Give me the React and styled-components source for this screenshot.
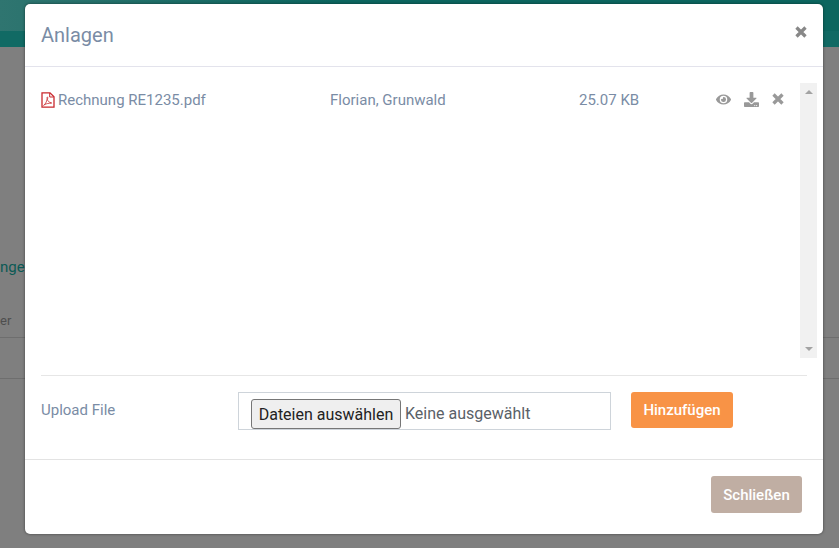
import styled, { createGlobalStyle } from "styled-components";
import { FaEye, FaDownload } from "react-icons/fa";

const GlobalStyle = createGlobalStyle`
  html, body {
    margin: 0;
    padding: 0;
    height: 100%;
    overflow: hidden;
    font-family: Roboto, "Liberation Sans", sans-serif;
  }
`;

const Page = styled.div`
  width: 839px;
  height: 548px;
  position: relative;
  overflow: hidden;
  background: #7f7f7f;
`;
const TopBar = styled.div`
  height: 31px;
  background: linear-gradient(to right, #2f7570, #0c665f 40%);
`;
const SubBar = styled.div`
  height: 16px;
  background: #116a64;
`;
const BehindLink = styled.div`
  margin-top: 210px;
  height: 20px;
  font-size: 15px;
  line-height: 20px;
  color: #0b5a55;
`;
const BehindHead = styled.div`
  margin-top: 33px;
  height: 26px;
  border-bottom: 1px solid #6e6e6e;
  padding-top: 1px;
  box-sizing: content-box;
  font-size: 13px;
  line-height: 20px;
  color: #4e4e4e;
`;
const BehindRow = styled.div`
  height: 40px;
  border-bottom: 1px solid #6e6e6e;
`;
const Backdrop = styled.div`
  position: absolute;
  inset: 0;
  padding: 4px 16px 14px 25px;
`;
const Modal = styled.div`
  width: 798px;
  height: 530px;
  box-sizing: border-box;
  background: #fff;
  border-radius: 5px;
  box-shadow: 0 0 3px rgba(0, 0, 0, 0.5);
  display: flex;
  flex-direction: column;
`;
const Header = styled.div`
  height: 62px;
  box-sizing: content-box;
  border-bottom: 1px solid #e3e3ec;
  padding: 0 16px;
  display: flex;
  align-items: center;
  justify-content: space-between;
`;
const Title = styled.h4`
  margin: 0;
  font-size: 20px;
  font-weight: 400;
  color: #7a8ca5;
`;
const CloseWrap = styled.div`
  display: flex;
  color: #888;
  margin-top: -6px;
`;
const Body = styled.div`
  flex: 1;
  padding: 16px 16px 0;
`;
const ListArea = styled.div`
  height: 275px;
  display: flex;
  margin-right: -10px;
`;
const FileList = styled.div`
  flex: 1;
`;
const FileRow = styled.div`
  height: 34px;
  display: grid;
  grid-template-columns: 289px 249px 137px 1fr;
  align-items: center;
  font-size: 15px;
  color: #7a8ca5;
`;
const FileName = styled.div`
  display: flex;
  align-items: center;
  gap: 3px;
`;
const Actions = styled.div`
  display: flex;
  align-items: center;
  gap: 13px;
  margin-top: -2px;
  color: #999;
  font-size: 15px;
`;
const ScrollTrack = styled.div`
  width: 17px;
  background: #f1f1f1;
  display: flex;
  flex-direction: column;
  justify-content: space-between;
  align-items: center;
  padding: 7px 0;
  box-sizing: border-box;
`;
const Arrow = styled.div`
  width: 0;
  height: 0;
  border-left: 4px solid transparent;
  border-right: 4px solid transparent;
  border-${(props) => (props.$down ? "top" : "bottom")}: 4px solid #a3a3a3;
`;
const UploadRow = styled.div`
  margin-top: 17px;
  border-top: 1px solid #e6e6e6;
  padding-top: 16px;
  display: flex;
  align-items: flex-start;
`;
const UploadLabel = styled.label`
  width: 197px;
  font-size: 15px;
  line-height: 36px;
  color: #7a8ca5;
`;
const FileBox = styled.div`
  width: 373px;
  height: 38px;
  box-sizing: border-box;
  border: 1px solid #ced4da;
  padding: 6px 12px 0;
  display: flex;
  align-items: center;
  gap: 4px;
  font-size: 16px;
  color: #5a6168;
`;
const PickButton = styled.button`
  width: 150px;
  height: 30px;
  padding: 0;
  box-sizing: border-box;
  border: 1px solid #767676;
  border-radius: 3px;
  background: #efefef;
  color: #222;
  font-family: inherit;
  font-size: 16px;
`;
const NoFile = styled.span`
  margin-bottom: 2px;
`;
const Button = styled.button`
  border: 0;
  border-radius: 3px;
  background: ${(props) => props.$bg};
  color: #fff;
  font-family: inherit;
  font-size: 15px;
  font-weight: 500;
  padding: 0;
`;
const AddButton = styled(Button)`
  width: 102px;
  height: 36px;
  margin-left: 20px;
`;
const Footer = styled.div`
  height: 75px;
  border-top: 1px solid #e3e3e3;
  padding: 16px 21px 0 0;
  display: flex;
  justify-content: flex-end;
  align-items: flex-start;
  box-sizing: border-box;
`;
const CloseButton = styled(Button)`
  width: 91px;
  height: 37px;
`;

const PdfIcon = () => (
  <svg width="14" height="16" viewBox="0 0 14 16" fill="none" stroke="#c9282d">
    <path d="M1 .8h8l4 4v10.400H1z" strokeWidth="1.300" />
    <path d="M8.700 1v4h4" strokeWidth="1" />
    <path
      d="M2.600 13.400c1.600-1 3-3.600 3.600-6.400-.4-1.400-.2-2 .2-2 .5 0 .5 1 0 2.400.6 2 1.700 3 3.600 3.200 1 .1 1 .8 0 .7-2-.2-4.500.3-6.400 1.300-.6.4-1 .9-1 .8z"
      strokeWidth="0.800"
    />
  </svg>
);

// heavier than the Fa5 cross, the picture uses the old Font Awesome one
const TimesIcon = () => (
  <svg width="12" height="12" viewBox="0 0 12 12" stroke="currentColor" strokeWidth="3.300">
    <path d="M1.500 1.500l9 9M10.500 1.500l-9 9" />
  </svg>
);

export default function App() {
  return (
    <Page>
      <GlobalStyle />
      <TopBar />
      <SubBar />
      <BehindLink>nge</BehindLink>
      <BehindHead>er</BehindHead>
      <BehindRow />
      <Backdrop>
        <Modal>
          <Header>
            <Title>Anlagen</Title>
            <CloseWrap>
              <TimesIcon />
            </CloseWrap>
          </Header>
          <Body>
            <ListArea>
              <FileList>
                <FileRow>
                  <FileName>
                    <PdfIcon />
                    Rechnung RE1235.pdf
                  </FileName>
                  <div>Florian, Grunwald</div>
                  <div>25.07 KB</div>
                  <Actions>
                    <FaEye />
                    <FaDownload />
                    <TimesIcon />
                  </Actions>
                </FileRow>
              </FileList>
              <ScrollTrack>
                <Arrow />
                <Arrow $down />
              </ScrollTrack>
            </ListArea>
            <UploadRow>
              <UploadLabel>Upload File</UploadLabel>
              <FileBox>
                <PickButton>Dateien auswählen</PickButton>
                <NoFile>Keine ausgewählt</NoFile>
              </FileBox>
              <AddButton $bg="#f89346">Hinzufügen</AddButton>
            </UploadRow>
          </Body>
          <Footer>
            <CloseButton $bg="#c0aea3">Schließen</CloseButton>
          </Footer>
        </Modal>
      </Backdrop>
    </Page>
  );
}
